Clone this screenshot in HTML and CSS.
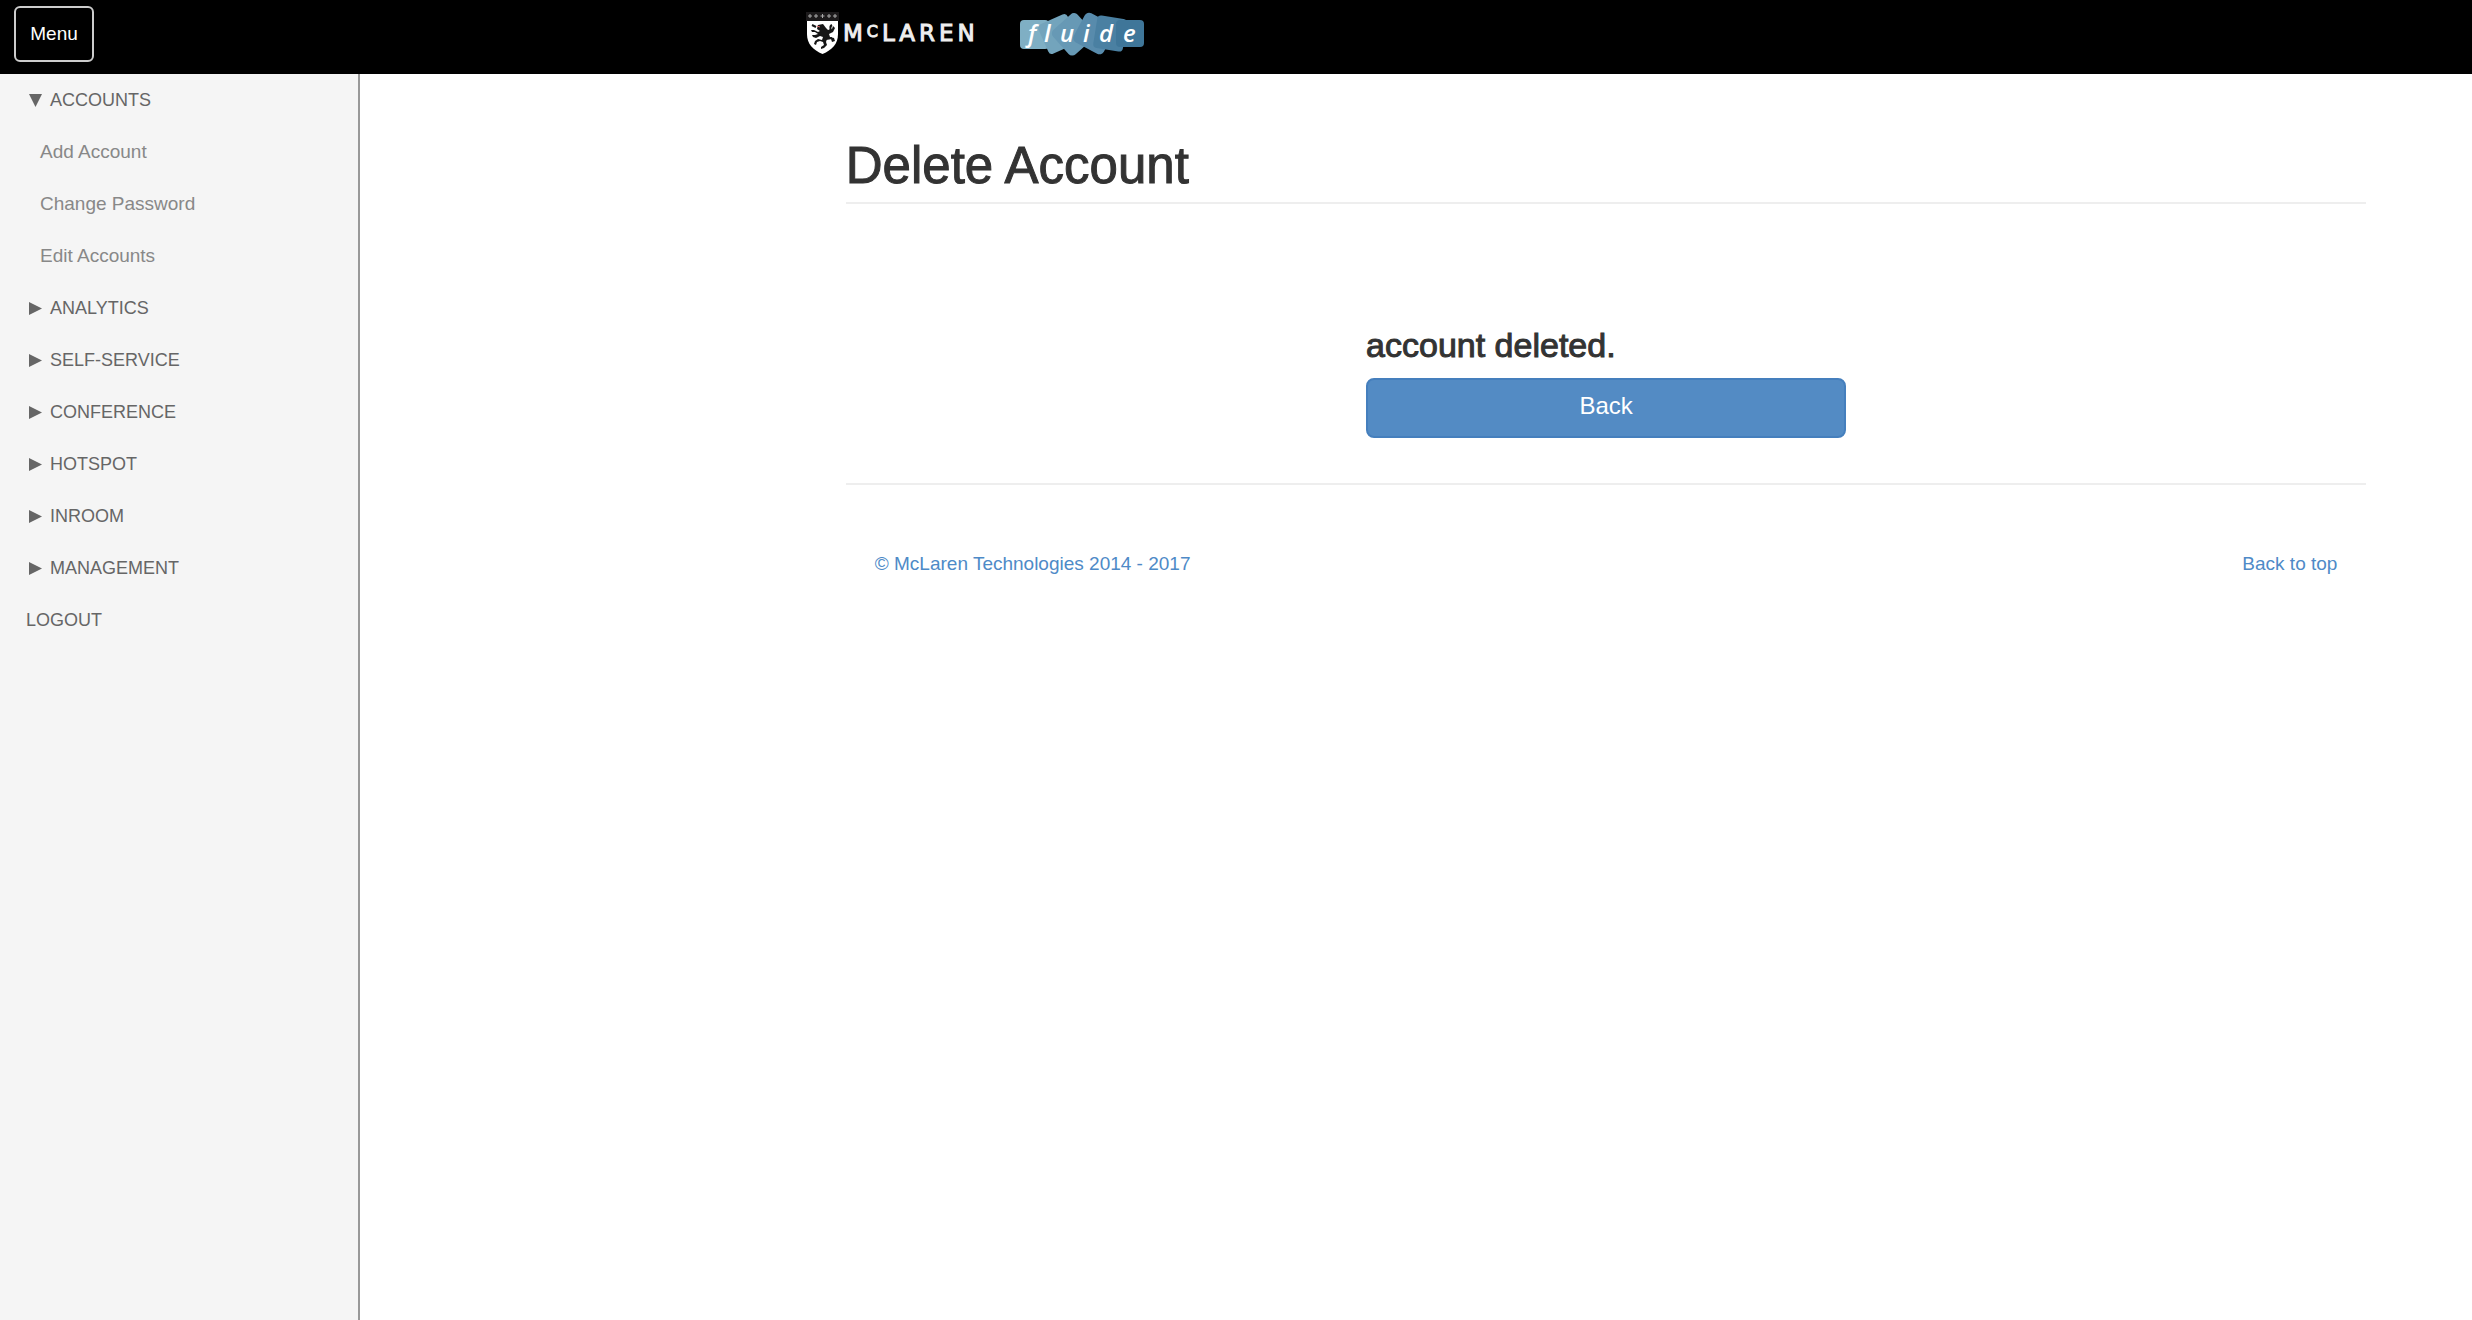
FILE: index.html
```html
<!DOCTYPE html>
<html lang="en">
<head>
<meta charset="utf-8">
<title>Delete Account</title>
<link rel="stylesheet" href="styles.css">
</head>
<body id="top">
<header class="topbar">
  <div class="topbar-menu"><button class="menu-button" type="button">Menu</button></div>
  <div class="logos">
    <svg class="logo" width="174" height="44" viewBox="0 0 174 44" role="img" aria-label="McLaren">
      <path d="M0 0H33V9H0Z" fill="#1c1a1b"/>
      <path d="M4 2v4M2 4h4M10 2v4M8 4h4M16.500 2v4M14.500 4h4M23 2v4M21 4h4M29 2v4M27 4h4" stroke="#aaa" stroke-width="1"/>
      <path d="M1 9H32V22C32 32 26 38 16.500 42C7 38 1 32 1 22Z" fill="#fff"/>
      <path d="M12 13l5-1 3 4 2 2 4-1 1-3 2 2-2 4-4 2 1 3 4 1 1 3-3 1-1-3-4 0-1 3 1 3-3 3-3 1 0-2 3-2-1-3-3-1-3 1-1 3-2-1 1-3 3-2 4 1 1-3-3-1-4 2-3-1-1-2 3 0 3-1-3-2-3 0-1-2 3 0 4 2 2-1-3-2Z" fill="#161616"/>
      <path d="M23 19c4-1-1-4 3-6M10 15l-4-2M20 27l6-1" stroke="#161616" stroke-width="2" fill="none"/>
      <path d="M11 14l3 1" stroke="#d66" stroke-width="1"/>
      <text class="wordmark" x="37" y="29">M<tspan class="wordmark-small" dy="-4">C</tspan><tspan dy="4">LAREN</tspan></text>
    </svg>
    <svg class="logo" width="124" height="44" viewBox="0 0 124 44" role="img" aria-label="fluide">
      <rect x="0" y="8" width="29" height="29" rx="4" fill="#7fafc4"/>
      <rect x="22" y="6" width="32" height="32" rx="4" fill="#73a4bc" transform="rotate(-24 38 22)"/>
      <rect x="37" y="6" width="33" height="33" rx="5" fill="#6799b5" transform="rotate(48 53.500 22)"/>
      <rect x="58" y="5" width="33" height="34" rx="5" fill="#588bac" transform="rotate(-62 74 22)"/>
      <rect x="75" y="5" width="30" height="33" rx="4" fill="#4a80a2" transform="rotate(9 90 22)"/>
      <rect x="96" y="8" width="28" height="27" rx="4" fill="#3f7699"/>
      <text class="fluide" y="30" x="8 24 40 63 79 103">fluide</text>
    </svg>
  </div>
</header>
<div class="layout">
  <nav class="sidebar" aria-label="Main">
    <ul class="nav-list">
      <li><button class="nav-item" type="button" aria-expanded="true"><svg class="arrow" width="13" height="13" viewBox="0 0 13 13"><path d="M0 0H13L6.500 13Z"/></svg>ACCOUNTS</button>
        <ul class="nav-list">
          <li><a class="nav-item nav-child" href="#">Add Account</a></li>
          <li><a class="nav-item nav-child" href="#">Change Password</a></li>
          <li><a class="nav-item nav-child" href="#">Edit Accounts</a></li>
        </ul>
      </li>
      <li><button class="nav-item" type="button" aria-expanded="false"><svg class="arrow" width="13" height="13" viewBox="0 0 13 13"><path d="M0 0L13 6.500L0 13Z"/></svg>ANALYTICS</button></li>
      <li><button class="nav-item" type="button" aria-expanded="false"><svg class="arrow" width="13" height="13" viewBox="0 0 13 13"><path d="M0 0L13 6.500L0 13Z"/></svg>SELF-SERVICE</button></li>
      <li><button class="nav-item" type="button" aria-expanded="false"><svg class="arrow" width="13" height="13" viewBox="0 0 13 13"><path d="M0 0L13 6.500L0 13Z"/></svg>CONFERENCE</button></li>
      <li><button class="nav-item" type="button" aria-expanded="false"><svg class="arrow" width="13" height="13" viewBox="0 0 13 13"><path d="M0 0L13 6.500L0 13Z"/></svg>HOTSPOT</button></li>
      <li><button class="nav-item" type="button" aria-expanded="false"><svg class="arrow" width="13" height="13" viewBox="0 0 13 13"><path d="M0 0L13 6.500L0 13Z"/></svg>INROOM</button></li>
      <li><button class="nav-item" type="button" aria-expanded="false"><svg class="arrow" width="13" height="13" viewBox="0 0 13 13"><path d="M0 0L13 6.500L0 13Z"/></svg>MANAGEMENT</button></li>
      <li><a class="nav-item nav-logout" href="#">LOGOUT</a></li>
    </ul>
  </nav>
  <div class="content">
    <main>
      <h1 class="page-title">Delete Account</h1>
      <section class="result">
        <h2 class="result-title">account deleted.</h2>
        <button class="primary-button" type="button">Back</button>
      </section>
    </main>
    <footer class="footer">
      <a href="#">© McLaren Technologies 2014 - 2017</a>
      <a href="#top">Back to top</a>
    </footer>
  </div>
</div>
</body>
</html>
```
FILE: styles.css
```css
* {
  box-sizing: border-box;
}

body {
  margin: 0;
  min-height: 100vh;
  display: flex;
  flex-direction: column;
  background: #fff;
  color: #333;
  font: 19px/28px "Liberation Sans", Arial, sans-serif;
}

button {
  font-family: inherit;
  cursor: pointer;
}

a {
  color: #4e8ac7;
  text-decoration: none;
}

.topbar {
  display: grid;
  grid-template-columns: 806fr 1666fr;
  height: 74px;
  background: #000;
}

.topbar-menu {
  padding: 6px 14px;
}

.menu-button {
  width: 80px;
  height: 56px;
  padding: 0;
  border: 2px solid #ccc;
  border-radius: 6px;
  background: #000;
  color: #fff;
  font-size: 19px;
}

.logos {
  display: flex;
  gap: 40px;
  padding-top: 12px;
}

.logo {
  display: block;
  overflow: visible;
}

.wordmark {
  font: 23px "DejaVu Sans", sans-serif;
  letter-spacing: 4px;
  fill: #eee;
  stroke: #eee;
  stroke-width: 1px;
}

.wordmark-small {
  font-size: 16px;
}

.fluide {
  font: italic 600 24px "Open Sans", sans-serif;
  fill: #fff;
}

.layout {
  display: grid;
  grid-template-columns: 360px 1fr;
  flex: 1;
}

.sidebar {
  background: #f5f5f5;
  border-right: 2px solid #999;
}

.nav-list {
  margin: 0;
  padding: 0;
  list-style: none;
}

.nav-item {
  display: flex;
  align-items: center;
  gap: 8px;
  width: 100%;
  height: 52px;
  padding: 0 29px;
  border: 0;
  background: none;
  color: #666;
  font-size: 18px;
}

.nav-child {
  padding-left: 40px;
  color: #888;
  font-size: 19px;
}

.nav-logout {
  padding-left: 26px;
}

.arrow {
  fill: #666;
}

.content {
  padding: 64px 5% 0 23%;
}

.page-title {
  margin: 0;
  padding-bottom: 8px;
  border-bottom: 2px solid #eee;
  font-size: 51px;
  font-weight: 400;
  line-height: 56px;
  -webkit-text-stroke: 1px #333;
}

.result {
  width: 480px;
  max-width: 100%;
  margin: 122px auto 45px;
}

.result-title {
  margin: 0 0 14px;
  font-size: 34px;
  font-weight: 400;
  line-height: 38px;
  -webkit-text-stroke: 1px #333;
}

.primary-button {
  display: block;
  width: 100%;
  height: 60px;
  padding: 0 0 4px;
  border: 2px solid #457fbd;
  border-radius: 8px;
  background: #538bc4;
  color: #fff;
  font-size: 24px;
}

.footer {
  display: flex;
  justify-content: space-between;
  padding: 65px 29px;
  border-top: 2px solid #eee;
}
```
